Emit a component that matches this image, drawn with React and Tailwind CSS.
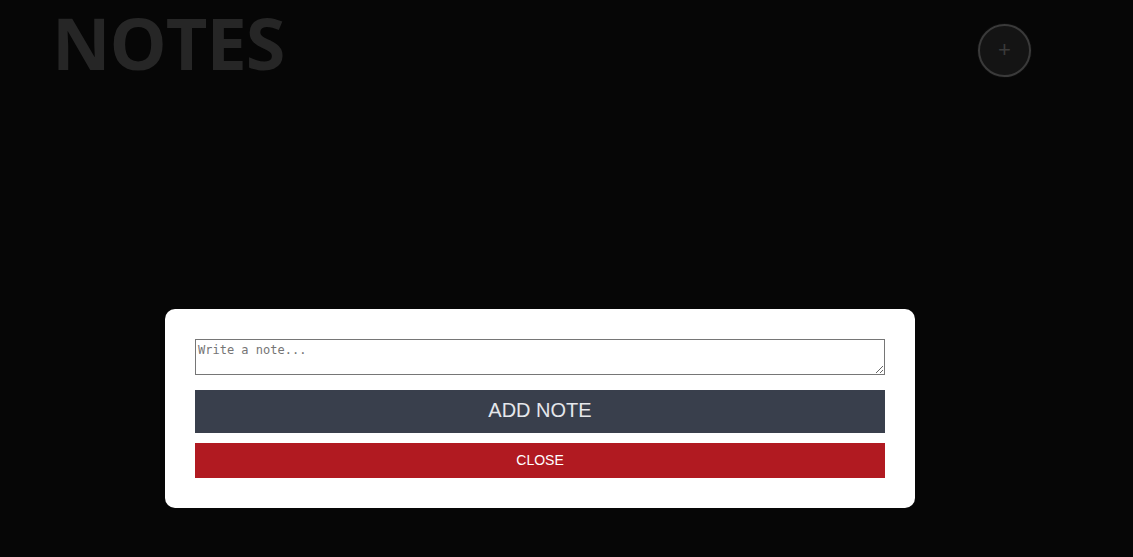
export default function App() {
    return (
        <div className="min-h-[557px] bg-[#060606] font-['Liberation_Sans',Arial,sans-serif]">
            {/* Header */}
            <header className="flex items-start pl-[52px] pr-[102px]">
                <h1 className="font-['Open_Sans',sans-serif] text-[72px] font-bold leading-[84px] tracking-[-1px] text-[#262626]">
                    NOTES
                </h1>
                <button className="ml-auto mt-[24px] flex h-[53px] w-[53px] items-center justify-center rounded-full border-2 border-[#3a3a3a] bg-[#141414] pb-[2px] text-[22px] leading-none text-[#3a3a3a] shadow-[0_0_0_1px_#0c0c0c]">
                    +
                </button>
            </header>

            {/* Modal */}
            <div className="ml-[165px] mt-[225px] w-[750px] rounded-[10px] bg-white p-[30px]">
                <textarea
                    placeholder="Write a note..."
                    className="block h-[36px] w-full resize-y border border-[#767676] px-[2px] py-[1px] font-['DejaVu_Sans_Mono',monospace] text-[12px] placeholder:text-[#757575]"
                />
                <button className="mt-[15px] block h-[43px] w-full bg-[#393f4c] pb-[3px] text-[20px] text-[#e5e7eb]">
                    ADD NOTE
                </button>
                <button className="mt-[10px] block h-[35px] w-full bg-[#b11a21] text-[14px] text-white">
                    CLOSE
                </button>
            </div>
        </div>
    )
}
